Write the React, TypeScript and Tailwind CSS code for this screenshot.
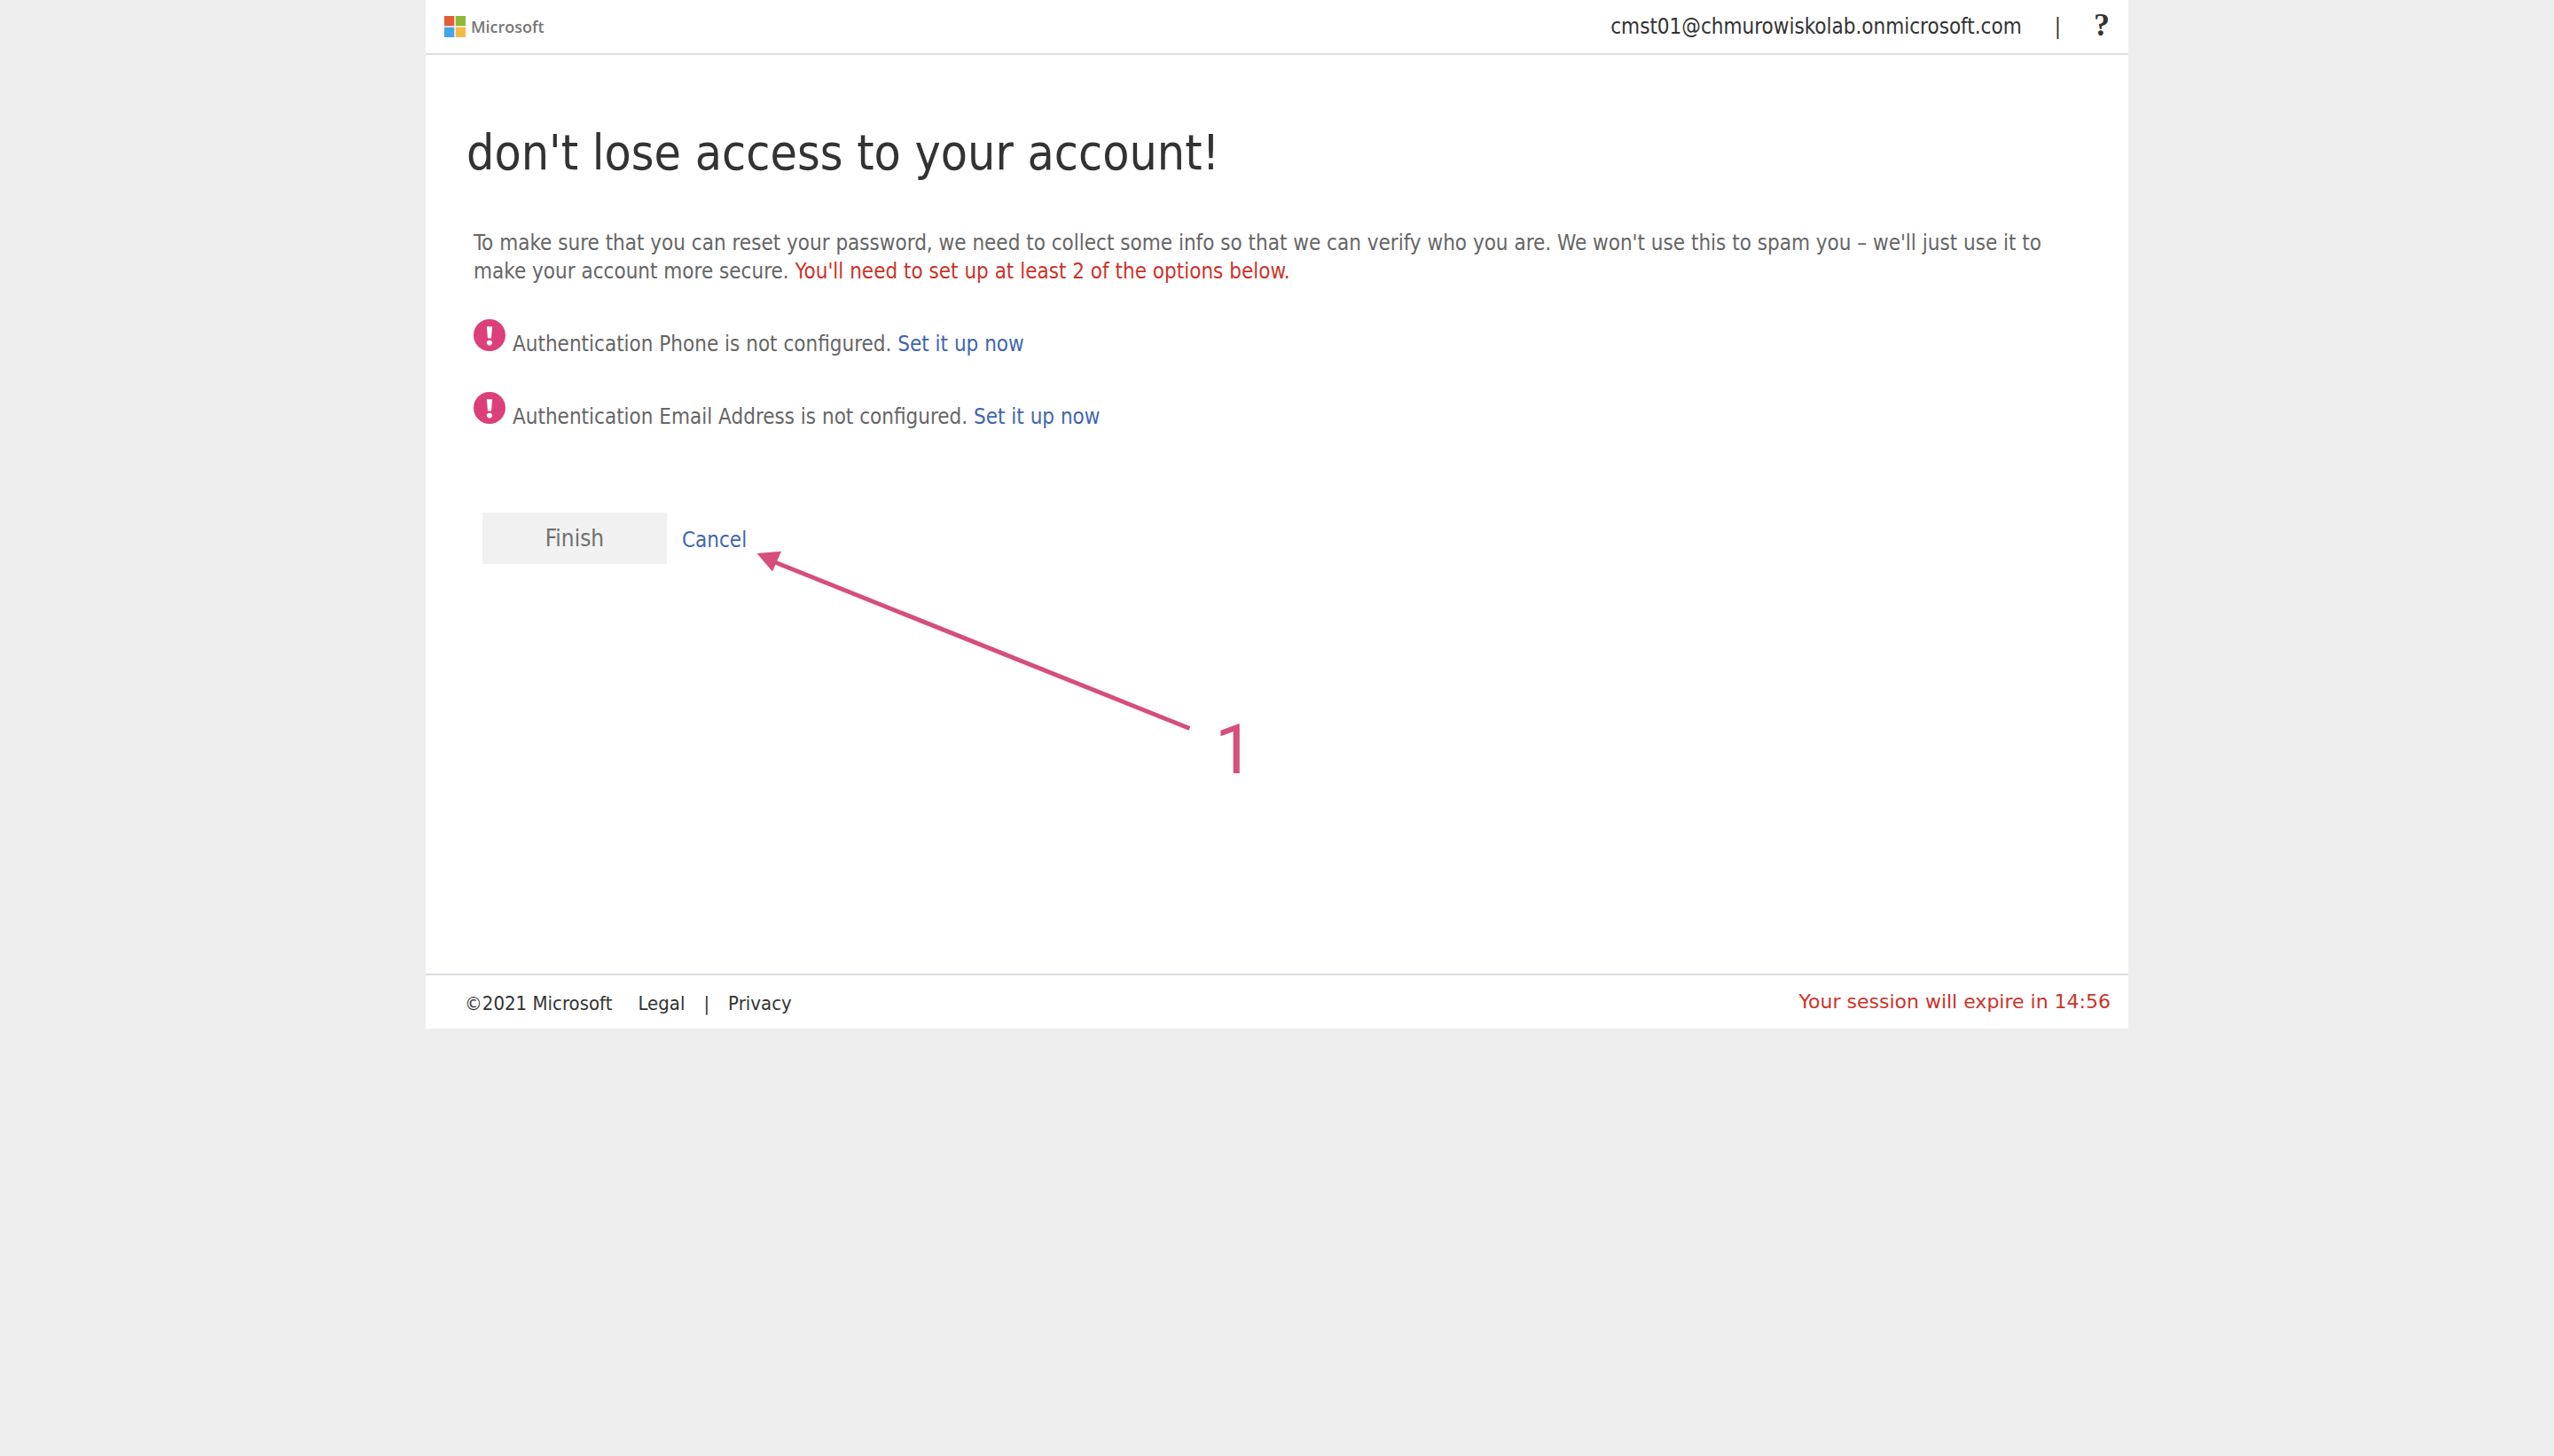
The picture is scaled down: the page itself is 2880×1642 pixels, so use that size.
import type { ReactNode } from 'react';

function MicrosoftLogo() {
  return (
    <a href="#home" className="flex items-center gap-1.5" aria-label="Microsoft">
      <svg width="24" height="24" viewBox="0 0 24 24" aria-hidden="true">
        <rect width="11.3" height="11.3" fill="#e25d38" />
        <rect x="12.7" width="11.3" height="11.3" fill="#8cb83a" />
        <rect y="12.7" width="11.3" height="11.3" fill="#45a4ea" />
        <rect x="12.7" y="12.7" width="11.3" height="11.3" fill="#f6bb42" />
      </svg>
      <span className="font-['Open_Sans',sans-serif] text-[18px] font-semibold leading-6 text-[#777777]">
        Microsoft
      </span>
    </a>
  );
}

function AlertIcon() {
  return (
    <svg width="36" height="36" viewBox="0 0 36 36" className="shrink-0" aria-hidden="true">
      <circle cx="18" cy="18" r="18" fill="#dc3f7a" />
      <path d="M14.8 8.2h6.4l-1.2 13.2h-4z" fill="#fff" />
      <ellipse cx="18" cy="26.6" rx="3.1" ry="2.8" fill="#fff" />
    </svg>
  );
}

function OptionRow({ children }: { children: ReactNode }) {
  return (
    <li className="flex h-11 items-baseline gap-2">
      <AlertIcon />
      <span>
        {children}{' '}
        <a href="#setup" className="text-[#3f66b0]">
          Set it up now
        </a>
      </span>
    </li>
  );
}

export default function App() {
  return (
    <div className="min-h-screen bg-[#eeeeee] font-['DejaVu_Sans_Condensed','DejaVu_Sans',sans-serif] text-2xl leading-8 text-[#333333]">
      <div className="mx-auto w-2/3 bg-white">
        <header className="flex h-[62px] items-center justify-between border-b-2 border-[#dcdce4] px-[21px]">
          <MicrosoftLogo />
          <div className="flex items-center gap-[37px]">
            <span>cmst01@chmurowiskolab.onmicrosoft.com</span>
            <span>|</span>
            <a
              href="#help"
              className="pb-1 font-['Liberation_Serif',serif] text-4xl leading-8 font-bold"
            >
              ?
            </a>
          </div>
        </header>

        <main className="relative min-h-[1036px] px-[54px] pt-[78px] text-[#666666]">
          <h1 className="-ml-2 text-[55px] leading-16 text-[#333333]">
            don't lose access to your account!
          </h1>
          <p className="mt-[54px]">
            To make sure that you can reset your password, we need to collect some info so that we
            can verify who you are. We won't use this to spam you – we'll just use it to make your
            account more secure.{' '}
            <span className="text-[#cc3329]">
              You'll need to set up at least 2 of the options below.
            </span>
          </p>
          <ul className="mt-[38px] flex flex-col gap-[38px]">
            <OptionRow>Authentication Phone is not configured.</OptionRow>
            <OptionRow>Authentication Email Address is not configured.</OptionRow>
          </ul>
          <div className="mt-[92px] ml-2.5 flex items-center gap-[17px]">
            <button
              type="button"
              className="h-[58px] w-52 bg-[#f1f1f1] text-[26px] leading-8 text-[#707070]"
            >
              Finish
            </button>
            <a href="#cancel" className="pt-1 text-[#3f66b0]">
              Cancel
            </a>
          </div>

          {/* Callout pointing at the Cancel link */}
          <div className="absolute top-[556px] left-[370px] flex items-end gap-6 text-[#d64e7b]">
            <svg width="496" height="268" viewBox="0 0 496 268" aria-hidden="true">
              <path d="M20 14.5L491.5 203.5" stroke="currentColor" strokeWidth="5" />
              <path d="M3.5 6L31 3.8L21 26.5z" fill="currentColor" />
            </svg>
            <span className="font-['Roboto',sans-serif] text-[78px] leading-20">1</span>
          </div>
        </main>

        <footer className="flex h-[62px] items-center justify-between border-t-2 border-[#dcdce4] pr-5 pl-11 text-[22px]">
          <div className="flex items-center gap-[21px] pt-1">
            <span className="pr-2">©2021 Microsoft</span>
            <a href="#legal">Legal</a>
            <span>|</span>
            <a href="#privacy">Privacy</a>
          </div>
          <span className="font-['DejaVu_Sans',sans-serif] text-[#cc3329]">
            Your session will expire in 14:56
          </span>
        </footer>
      </div>
    </div>
  );
}
